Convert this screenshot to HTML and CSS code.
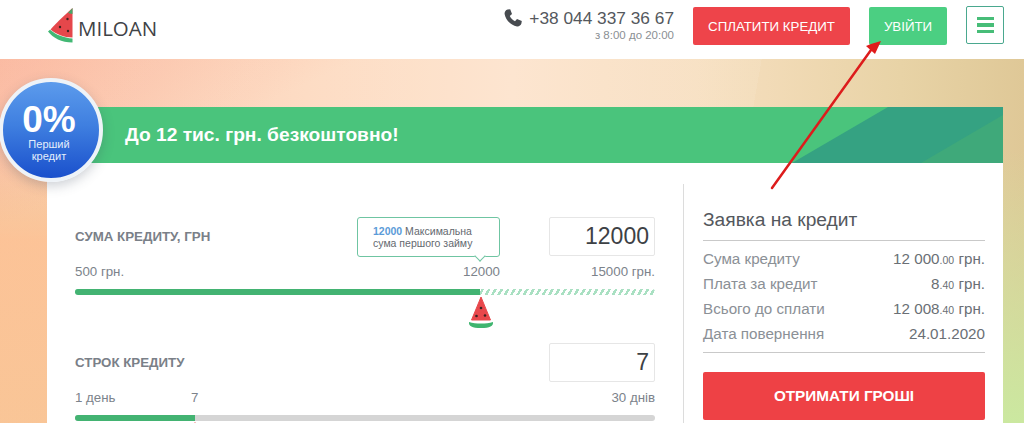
FILE: index.html
```html
<!DOCTYPE html>
<html lang="uk">
<head>
<meta charset="utf-8">
<title>MILOAN</title>
<link rel="stylesheet" href="styles.css">
</head>
<body>
<header class="top">
  <a class="logo">
    <svg class="logo-icon" width="27" height="37" viewBox="0 0 27 37">
      <path d="M25.500 1 C22 4 11 14 3.500 22.500 C9 27 17 30.500 25.500 30.500Z" fill="#e5474b"/>
      <path d="M1 24.500 L3 22.800 C9 28 17 31 25.500 31.500 L25.500 35.500 C14.500 35.500 6 31 1 24.500Z" fill="#42b874"/>
      <path d="M25.500 1 L25.500 7 L21 6Z" fill="#45a86a"/>
      <g fill="#40221f"><circle cx="20.500" cy="12" r="1.200"/><circle cx="13" cy="20" r="1.200"/><circle cx="21" cy="24" r="1.200"/></g>
    </svg>
    <span class="logo-text">MILOAN</span>
  </a>
  <div class="top-right">
    <div class="contact">
      <div class="phone">
        <svg class="phone-icon" width="18" height="18" viewBox="0 0 18 18"><path d="M3.600 0.600 L6.200 0.200 L8 5 L5.800 7 C6.600 9 8.800 11.200 11 12.200 L13 10 L17.800 12 L17.400 14.600 C16.800 16.600 15 17.600 13 17.400 C7 16.400 1.600 11 0.600 5 C0.400 3 1.600 1.200 3.600 0.600Z" fill="#474b50"/></svg>
        <span>+38 044 337 36 67</span>
      </div>
      <div class="hours">з 8:00 до 20:00</div>
    </div>
    <a class="btn btn-red">СПЛАТИТИ КРЕДИТ</a>
    <a class="btn btn-green">УВІЙТИ</a>
    <button class="burger" aria-label="Меню"><i></i><i></i><i></i></button>
  </div>
</header>

<main class="hero">
  <div class="badge">
    <div class="badge-big">0%</div>
    <div class="badge-small">Перший<br>кредит</div>
  </div>
  <div class="card">
    <div class="banner">
      <span>До 12 тис. грн. безкоштовно!</span>
      <svg class="banner-art" width="211" height="56" viewBox="0 0 211 56" preserveAspectRatio="none">
        <polygon points="0,56 96,0 211,0 211,56" fill="#35a282"/>
        <polygon points="129,56 211,8 211,56" fill="#3fa97a"/>
      </svg>
    </div>
    <div class="body">
      <section class="calc">
        <div class="field first">
          <div class="field-head">
            <span class="field-label">СУМА КРЕДИТУ, ГРН</span>
            <div class="tip"><b>12000</b> Максимальна<br>сума першого займу</div>
            <div class="value">12000</div>
          </div>
          <div class="scale"><span>500 грн.</span><span class="cur cur-a">12000</span><span>15000 грн.</span></div>
          <div class="track track-hatch"><div class="fill fill-a"></div>
            <svg class="melon melon-a" width="26" height="33" viewBox="0 0 26 33">
              <path d="M13 1 L22.500 24 L3.500 24Z" fill="#e8484c" stroke="#e8484c" stroke-linejoin="round"/>
              <path d="M1 26 C8 28 18 28 25 26 C25.500 30 22 32 13 32 C4 32 .5 30 1 26Z" fill="#3fb56f"/>
              <g fill="#3a2222"><circle cx="13" cy="12" r="1.300"/><circle cx="8.500" cy="20" r="1.300"/><circle cx="17" cy="19.500" r="1.300"/></g>
            </svg>
          </div>
        </div>
        <div class="field second">
          <div class="field-head">
            <span class="field-label">СТРОК КРЕДИТУ</span>
            <div class="value">7</div>
          </div>
          <div class="scale"><span>1 день</span><span class="cur cur-b">7</span><span>30 днів</span></div>
          <div class="track track-grey"><div class="fill fill-b"></div>
            <svg class="melon melon-b" width="26" height="2" viewBox="0 0 26 2">
              <path d="M13 0 L15 3 L11 3Z" fill="#e8484c"/>
            </svg>
          </div>
        </div>
      </section>
      <aside class="summary">
        <h2>Заявка на кредит</h2>
        <dl class="rows">
          <div><dt>Сума кредиту</dt><dd>12 000<small>.00</small> грн.</dd></div>
          <div><dt>Плата за кредит</dt><dd>8<small>.40</small> грн.</dd></div>
          <div><dt>Всього до сплати</dt><dd>12 008<small>.40</small> грн.</dd></div>
          <div><dt>Дата повернення</dt><dd>24.01.2020</dd></div>
        </dl>
        <a class="cta">ОТРИМАТИ ГРОШІ</a>
      </aside>
    </div>
  </div>
</main>

<svg class="annotation" width="1024" height="423" viewBox="0 0 1024 423">
  <line x1="772" y1="188" x2="871" y2="50" stroke="#dd1c1c" stroke-width="2.500" stroke-linecap="round"/>
  <polygon points="881,41 871,44 866,46 875,54" fill="#e01b1b"/>
</svg>
</body>
</html>
```
FILE: styles.css
```css
* { box-sizing: border-box; }
html, body { margin: 0; height: 423px; overflow: hidden; }
body { position: relative; font-family: "Liberation Sans", Arial, sans-serif; color: #6f7780; background: #fff; }

.top { height: 59px; display: flex; justify-content: space-between; padding: 7px 20px 0 47px; background: #fff; }
.logo { display: flex; align-items: flex-start; color: #3f4347; }
.logo-text { font-family: "Open Sans", sans-serif; font-size: 20.500px; line-height: 24px; margin: 9px 0 0 4px; }
.top-right { display: flex; align-items: flex-start; }
.contact { text-align: right; margin-right: 19px; }
.phone { display: flex; align-items: center; gap: 7px; font-size: 17.300px; line-height: 20px; color: #54585d; margin-top: 1px; }
.hours { font-size: 11.500px; line-height: 14px; color: #8b8f94; margin-top: 0; }
.btn { display: flex; align-items: center; justify-content: center; height: 38px; border-radius: 2px; color: #fff; font-size: 13.300px; }
.btn-red { width: 157px; background: #ee444a; margin-right: 19px; }
.btn-green { width: 78px; background: #4bcf82; margin-right: 19px; }
.burger { width: 38px; height: 38px; margin-top: -1px; padding: 0; background: #fff; border: 1px solid #4aa88f; border-radius: 2px; display: flex; flex-direction: column; gap: 3px; align-items: center; justify-content: center; }
.burger i { display: block; width: 17px; height: 3.500px; background: #47bd78; }

.hero {
  position: relative;
  height: 364px;
  padding: 48px 21px 0 47px;
  background:
    linear-gradient(100deg, rgba(255,255,255,.08) 0 70%, rgba(255,255,255,0) 70%),
    linear-gradient(155deg, rgba(250,150,125,.3) 0, rgba(250,150,125,0) 20%),
    linear-gradient(180deg, rgba(254,190,140,0) 20%, rgba(254,188,140,.9) 50%) 0 0 / 47px 100% no-repeat,
    linear-gradient(180deg, rgba(205,232,160,0) 25%, rgba(203,232,160,1) 100%),
    linear-gradient(90deg, #fbc3a8 0, #fdd9bf 30%, #fde3cc 50%, #f7dfc0 68%, #e8d3a6 88%, #dfc897 100%);
}

.badge {
  position: absolute; left: -1px; top: 19px; z-index: 2;
  width: 104px; height: 104px; border-radius: 50%;
  border: 4px solid #eef3f8;
  background: linear-gradient(180deg, #5c9bec 0, #3f7fe0 45%, #1a50cc 100%);
  box-shadow: 0 4px 12px rgba(60,70,90,.25);
  color: #fff; text-align: center;
  padding-right: 4px;
}
.badge-big { font-size: 37px; font-weight: 700; line-height: 40px; margin-top: 18px; }
.badge-small { font-size: 11px; line-height: 12px; color: #e4eefb; margin-top: -2px; }

.card { background: #fff; height: 316px; }
.banner { position: relative; height: 56px; background: #4ac47c; color: #fff; font-size: 19.200px; font-weight: 700; line-height: 56px; padding-left: 78px; }
.banner-art { position: absolute; right: 0; top: 0; }

.body { display: flex; padding-top: 21px; }
.calc { width: 637px; height: 239px; padding: 33px 28px 0; border-right: 1px solid #dcdcdc; }
.summary { flex: 1; padding: 24px 18px 0 19px; }

.field-head { position: relative; display: flex; justify-content: space-between; align-items: center; height: 39px; }
.field-label { font-size: 13.300px; font-weight: 700; color: #7a8088; }
.value { width: 106px; height: 39px; border: 1px solid #e6e6e6; border-radius: 2px; text-align: right; padding-right: 5px; font-size: 23px; line-height: 37px; color: #3d4145; }
.tip { position: absolute; left: 282px; top: 0; width: 143px; height: 40px; border: 1px solid #6fc5a2; border-radius: 3px; background: #fff; padding: 7px 0 0 15px; font-size: 10.500px; line-height: 12px; color: #64696f; }
.tip b { color: #5b9bd8; }
.tip::after { content: ""; position: absolute; left: 118px; bottom: -4px; width: 7px; height: 7px; background: #fff; border-right: 1px solid #6fc5a2; border-bottom: 1px solid #6fc5a2; transform: rotate(45deg); }

.scale { position: relative; display: flex; justify-content: space-between; font-size: 13.300px; line-height: 14px; margin-top: 9px; color: #7c838b; }
.cur { position: absolute; top: 0; }
.cur-a { left: 388px; }
.cur-b { left: 116px; }

.track { position: relative; height: 6px; margin-top: 10px; border-radius: 3px; }
.track-hatch { background: repeating-linear-gradient(120deg, #a9e0c2 0 2.500px, #fff 2.500px 5.500px); }
.track-grey { background: #d5d5d5; }
.fill { height: 6px; background: #43b372; border-radius: 3px 0 0 3px; }
.fill-a { width: 405px; }
.fill-b { width: 120px; }
.melon { position: absolute; top: 7px; display: block; }
.melon-a { left: 393px; }
.melon-b { left: 107px; }
.second { margin-top: 48px; }

.summary h2 { margin: 0; padding-bottom: 8px; border-bottom: 1px solid #c9c9c9; font-size: 19.200px; font-weight: 400; line-height: 24px; color: #54585d; }
.rows { margin: 5px 0 0; padding-bottom: 6px; border-bottom: 1px solid #c9c9c9; }
.rows div { display: flex; justify-content: space-between; height: 25px; align-items: center; font-size: 15.200px; }
.rows dt { color: #8b9096; }
.rows dd { margin: 0; color: #6a6f75; }
.rows small { font-size: 10.500px; }
.cta { display: flex; align-items: center; justify-content: center; height: 48px; margin-top: 19px; background: #ee4145; border-radius: 2px; color: #fff; font-size: 15.300px; font-weight: 700; }

.annotation { position: absolute; left: 0; top: 0; z-index: 5; pointer-events: none; }
```
